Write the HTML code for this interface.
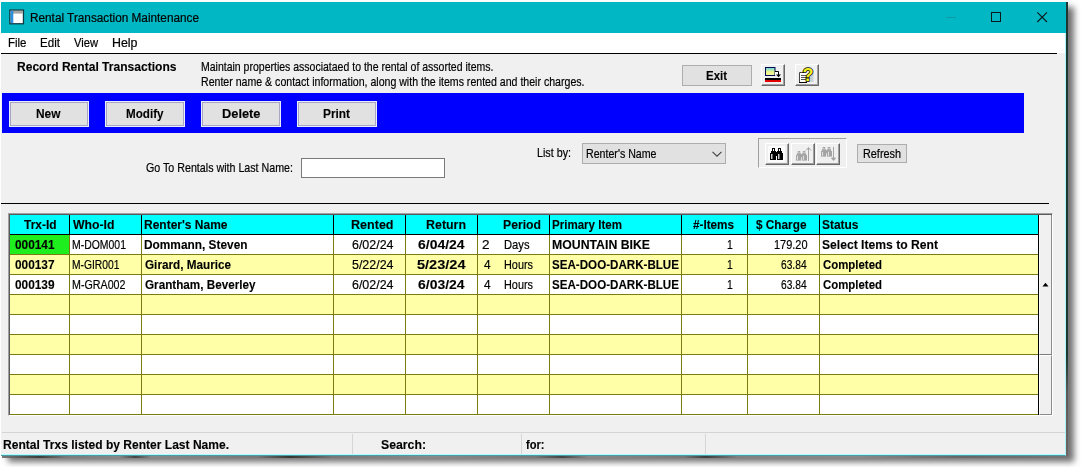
<!DOCTYPE html>
<html lang="en"><head><meta charset="utf-8"><title>Rental Transaction Maintenance</title>
<style>
html,body{margin:0;padding:0}
body{width:1081px;height:467px;overflow:hidden;position:relative;background:#fff;font-family:"Liberation Sans",sans-serif}
div,span,svg{position:absolute;box-sizing:border-box}
.t{white-space:pre;line-height:1em;transform-origin:0 0;color:#000;-webkit-text-stroke:0.2px #000}
.b{font-weight:bold;-webkit-text-stroke:0.12px #000}
.btn{background:#e1e1e1;border:1px solid #adadad}
.tb{background:#e1e1e1;border:1px solid #a6a6c4;outline:1px solid #ececff}
.r3{background:#f0f0f0;border-top:1px solid #fff;border-left:1px solid #fff;border-right:1px solid #696969;border-bottom:1px solid #696969}
.r3:after{content:"";position:absolute;left:0;top:0;right:0;bottom:0;border-right:1px solid #a0a0a0;border-bottom:1px solid #a0a0a0}
.vl{width:1px;background:#7c7c10}
.hl{height:1px;background:#7c7c10}
</style></head>
<body>
<div id="shadow" style="left:8px;top:6.5px;width:1065.5px;height:455px;background:rgba(0,0,0,.56);filter:blur(3.2px)"></div>
<div style="left:2px;top:456px;width:1066px;height:2px;background:linear-gradient(to right,#777 0,#3a3d38 3.5%,#7a7a78 6%,#888 11%,#444 12.5%,#888 14%,#777 24%,#33352e 27%,#777 31%,#8a8a8a 40%,#777 50%,#444 52.5%,#888 55%,#777 64%,#3c3c3c 66%,#808080 69%,#8a8a8a 80%,#666 90%,#777 100%)"></div>
<div style="left:1066px;top:2px;width:2px;height:454px;background:linear-gradient(to bottom,#1d3832 0,#1d3832 78%,#5c5a58 86%,#6b6664 100%)"></div>
<div id="window" style="left:1px;top:2px;width:1065px;height:454px;background:#f0f0f0;border-right:1px solid #a8f4f8;border-bottom:1px solid #4a9ca4">
</div>
<div style="left:1px;top:454px;width:1065px;height:1px;background:#b4fbfd"></div>
<div id="titlebar" style="left:1px;top:2px;width:1065px;height:31px;background:#00b7c3"></div>
<svg style="left:9px;top:9px" width="16" height="16" viewBox="0 0 16 16"><rect x="0.2" y="0.4" width="14.9" height="15" fill="#0c3a44"/><rect x="1.6" y="1.8" width="12.2" height="12.3" fill="#fff"/><rect x="1.6" y="1.8" width="12.2" height="2.8" fill="#a4a4a4"/><rect x="1.6" y="1.8" width="2.7" height="12.3" fill="#2a8fdc"/></svg>
<div style="left:946px;top:17px;width:10px;height:1px;background:#0c9aa6"></div>
<div style="left:991px;top:12px;width:10px;height:10px;border:1px solid #0a1a1c"></div>
<svg style="left:1036px;top:11px" width="13" height="13" viewBox="0 0 13 13"><path d="M1.3 1.3 L11 11 M11 1.3 L1.3 11" stroke="#0a1a1c" stroke-width="1.1" fill="none"/></svg>
<div id="menubar" style="left:1px;top:33px;width:1064px;height:20px;background:#fff"></div>
<div style="left:1px;top:53px;width:1056px;height:1px;background:#000"></div>
<div id="toolbar" style="left:2px;top:93px;width:1022px;height:40px;background:#0000fe"></div>
<div class="tb" style="left:10px;top:102px;width:78px;height:24px;"></div>
<div class="tb" style="left:106px;top:102px;width:78px;height:24px;"></div>
<div class="tb" style="left:202px;top:102px;width:78px;height:24px;"></div>
<div class="tb" style="left:298px;top:102px;width:78px;height:24px;"></div>
<div class="btn" style="left:682px;top:65px;width:70px;height:21px;"></div>
<div class="r3" style="left:761px;top:64px;width:24px;height:22px;"></div>
<div class="r3" style="left:795px;top:64px;width:24px;height:22px;"></div>
<svg style="left:761px;top:64px" width="24" height="22" viewBox="0 0 24 22">
<defs><linearGradient id="g1" x1="0" y1="0" x2="0" y2="1"><stop offset="0" stop-color="#5fd0e8"/><stop offset="0.55" stop-color="#eef58a"/><stop offset="1" stop-color="#f6f6a0"/></linearGradient></defs>
<rect x="4.5" y="3.5" width="9.5" height="8" fill="url(#g1)" stroke="#000a50" stroke-width="1"/>
<path d="M14 7.5 H17.5 V11" stroke="#000" stroke-width="1" fill="none"/>
<rect x="14" y="8" width="3" height="3.5" fill="#fff"/>
<path d="M15 10.5 H20 L17.5 13.2 Z" fill="#000"/>
<rect x="4" y="14" width="16" height="2" fill="#000"/>
<rect x="4" y="16" width="16" height="2" fill="#e00000"/>
</svg>
<svg style="left:795px;top:64px" width="24" height="22" viewBox="0 0 24 22">
<rect x="5" y="8" width="8" height="10" fill="#fff" stroke="#333" stroke-width="0"/>
<path d="M4.5 18.5 V8.5 H9" stroke="#444" stroke-width="1" fill="none"/>
<path d="M4 18.5 H12" stroke="#000" stroke-width="1" fill="none"/>
<path d="M6 11.5 H11 M6 13.5 H11 M6 15.5 H11" stroke="#555" stroke-width="1"/>
<rect x="15" y="6" width="3.5" height="12" fill="#b8c4cc" opacity="0.7"/>
<text x="7.6" y="16.8" font-family="Liberation Sans, sans-serif" font-weight="bold" font-size="18" fill="#f4f020" stroke="#000" stroke-width="1.5" paint-order="stroke">?</text>
</svg>
<div style="left:301px;top:158px;width:144px;height:20px;background:#fff;border:1px solid #7a7a7a"></div>
<div class="btn" style="left:582px;top:143px;width:144px;height:21px;"></div>
<svg style="left:711px;top:150px" width="12" height="8" viewBox="0 0 12 8"><path d="M1.5 1.8 L6 6.2 L10.5 1.8" stroke="#444" stroke-width="1.1" fill="none"/></svg>
<div style="left:758px;top:138px;width:89px;height:30px;border-top:1px solid #a0a0a0;border-left:1px solid #a0a0a0;border-right:1px solid #fff;border-bottom:1px solid #fff"></div>
<div class="r3" style="left:765px;top:143px;width:24px;height:22px;"></div>
<div class="r3" style="left:791px;top:143px;width:24px;height:22px;"></div>
<div class="r3" style="left:816px;top:143px;width:24px;height:22px;"></div>
<svg style="left:758px;top:138px" width="89" height="30" viewBox="758 138 89 30">
<rect x="768" y="146" width="17" height="16" fill="#fbfbfb"/>
<g transform="translate(770,148)" fill="#000"><rect x="2" y="0" width="3" height="4"/><rect x="1" y="3" width="5" height="3"/><rect x="0" y="5" width="6" height="7"/><rect x="8" y="0" width="3" height="4"/><rect x="7" y="3" width="5" height="3"/><rect x="7" y="5" width="6" height="7"/><rect x="5" y="4" width="3" height="4"/><rect x="1.2" y="6" width="1.2" height="5" fill="#fff"/><rect x="8.2" y="6" width="1.2" height="5" fill="#fff"/><rect x="3" y="1" width="1" height="2" fill="#fff"/><rect x="9" y="1" width="1" height="2" fill="#fff"/></g>

<g transform="translate(796,151) scale(0.846,0.8)" fill="#a4a4a4"><g transform="translate(0,0)" fill="#a4a4a4"><rect x="2" y="0" width="3" height="4"/><rect x="1" y="3" width="5" height="3"/><rect x="0" y="5" width="6" height="7"/><rect x="8" y="0" width="3" height="4"/><rect x="7" y="3" width="5" height="3"/><rect x="7" y="5" width="6" height="7"/><rect x="5" y="4" width="3" height="4"/><rect x="1.2" y="6" width="1.2" height="5" fill="#e4e4e4"/><rect x="8.2" y="6" width="1.2" height="5" fill="#e4e4e4"/><rect x="3" y="1" width="1" height="2" fill="#e4e4e4"/><rect x="9" y="1" width="1" height="2" fill="#e4e4e4"/></g></g>
<path d="M808.5 148 V161" stroke="#a4a4a4" stroke-width="1"/><path d="M806 150.5 L808.5 147.5 L811 150.5" stroke="#a4a4a4" stroke-width="1" fill="none"/>
<g transform="translate(821,147) scale(0.846,0.8)" fill="#a4a4a4"><g transform="translate(0,0)" fill="#a4a4a4"><rect x="2" y="0" width="3" height="4"/><rect x="1" y="3" width="5" height="3"/><rect x="0" y="5" width="6" height="7"/><rect x="8" y="0" width="3" height="4"/><rect x="7" y="3" width="5" height="3"/><rect x="7" y="5" width="6" height="7"/><rect x="5" y="4" width="3" height="4"/><rect x="1.2" y="6" width="1.2" height="5" fill="#e4e4e4"/><rect x="8.2" y="6" width="1.2" height="5" fill="#e4e4e4"/><rect x="3" y="1" width="1" height="2" fill="#e4e4e4"/><rect x="9" y="1" width="1" height="2" fill="#e4e4e4"/></g></g>
<path d="M833.5 147 V160" stroke="#a4a4a4" stroke-width="1"/><path d="M831.5 158 L833.5 160.5 L835.5 158 Z" stroke="#a4a4a4" stroke-width="1" fill="#a4a4a4"/>
</svg>
<div class="btn" style="left:857px;top:144px;width:50px;height:19px;"></div>
<div style="left:1px;top:203px;width:1048px;height:1px;background:#000"></div>
<div style="left:8px;top:213px;width:1045px;height:203px;background:#f0f0f0;border-top:1px solid #a0a0a0;border-left:1px solid #a0a0a0;border-right:1px solid #fff;border-bottom:1px solid #fff"></div>
<div style="left:9px;top:214px;width:1043px;height:201px;border-top:1px solid #5a5a5a;border-left:1px solid #5a5a5a"></div>
<div style="left:10px;top:215px;width:1028px;height:19px;background:#00ffff"></div>
<div style="left:10px;top:235px;width:1028px;height:19px;background:#ffffff"></div>
<div style="left:10px;top:255px;width:1028px;height:19px;background:#ffffa8"></div>
<div style="left:10px;top:275px;width:1028px;height:19px;background:#ffffff"></div>
<div style="left:10px;top:295px;width:1028px;height:19px;background:#ffffa8"></div>
<div style="left:10px;top:315px;width:1028px;height:19px;background:#ffffff"></div>
<div style="left:10px;top:335px;width:1028px;height:19px;background:#ffffa8"></div>
<div style="left:10px;top:355px;width:1028px;height:19px;background:#ffffff"></div>
<div style="left:10px;top:375px;width:1028px;height:19px;background:#ffffa8"></div>
<div style="left:10px;top:395px;width:1028px;height:19px;background:#ffffff"></div>
<div style="left:10px;top:235px;width:59px;height:19px;background:#1eee1e"></div>
<div style="left:10px;top:234px;width:1028px;height:1px;background:#000"></div>
<div class="hl" style="left:10px;top:254px;width:1028px;height:1px;"></div>
<div class="hl" style="left:10px;top:274px;width:1028px;height:1px;"></div>
<div class="hl" style="left:10px;top:294px;width:1028px;height:1px;"></div>
<div class="hl" style="left:10px;top:314px;width:1028px;height:1px;"></div>
<div class="hl" style="left:10px;top:334px;width:1028px;height:1px;"></div>
<div class="hl" style="left:10px;top:354px;width:1028px;height:1px;"></div>
<div class="hl" style="left:10px;top:374px;width:1028px;height:1px;"></div>
<div class="hl" style="left:10px;top:394px;width:1028px;height:1px;"></div>
<div class="hl" style="left:10px;top:414px;width:1028px;height:1px;"></div>
<div style="left:69px;top:215px;width:1px;height:20px;background:#000"></div>
<div class="vl" style="left:69px;top:235px;width:1px;height:180px;"></div>
<div style="left:141px;top:215px;width:1px;height:20px;background:#000"></div>
<div class="vl" style="left:141px;top:235px;width:1px;height:180px;"></div>
<div style="left:333px;top:215px;width:1px;height:20px;background:#000"></div>
<div class="vl" style="left:333px;top:235px;width:1px;height:180px;"></div>
<div style="left:405px;top:215px;width:1px;height:20px;background:#000"></div>
<div class="vl" style="left:405px;top:235px;width:1px;height:180px;"></div>
<div style="left:477px;top:215px;width:1px;height:20px;background:#000"></div>
<div class="vl" style="left:477px;top:235px;width:1px;height:180px;"></div>
<div style="left:549px;top:215px;width:1px;height:20px;background:#000"></div>
<div class="vl" style="left:549px;top:235px;width:1px;height:180px;"></div>
<div style="left:681px;top:215px;width:1px;height:20px;background:#000"></div>
<div class="vl" style="left:681px;top:235px;width:1px;height:180px;"></div>
<div style="left:747px;top:215px;width:1px;height:20px;background:#000"></div>
<div class="vl" style="left:747px;top:235px;width:1px;height:180px;"></div>
<div style="left:819px;top:215px;width:1px;height:20px;background:#000"></div>
<div class="vl" style="left:819px;top:235px;width:1px;height:180px;"></div>
<div style="left:1038px;top:215px;width:1px;height:200px;background:#000"></div>
<div style="left:1039px;top:215px;width:13px;height:140px;background:#f0f0f0;border-right:1px solid #8c8c8c;border-bottom:1px solid #7a7a7a;border-left:1px solid #fafafa"></div>
<div style="left:1039px;top:355px;width:13px;height:60px;background:#f0f0f0;border-top:1px solid #fff;border-left:1px solid #fff;border-right:1px solid #8c8c8c;border-bottom:1px solid #8c8c8c"></div>
<svg style="left:1042px;top:282px" width="8" height="5" viewBox="0 0 8 5"><path d="M0.5 4.5 L3.5 0.8 L6.5 4.5 Z" fill="#000"/></svg>
<div style="left:2px;top:432px;width:1063px;height:1px;background:#d4d4d4"></div>
<div style="left:352px;top:434px;width:1px;height:20px;background:#d6d6d6"></div>
<div style="left:521px;top:434px;width:1px;height:20px;background:#d6d6d6"></div>
<div style="left:705px;top:434px;width:1px;height:20px;background:#d6d6d6"></div>
<span class="t" style="left:29.52px;top:12px;font-size:12px;transform:scaleX(0.9820)">Rental Transaction Maintenance</span>
<span class="t" style="left:8.01px;top:37px;font-size:12px;transform:scaleX(0.9565)">File</span>
<span class="t" style="left:39.56px;top:37px;font-size:12px;transform:scaleX(0.9661)">Edit</span>
<span class="t" style="left:73.96px;top:37px;font-size:12px;transform:scaleX(0.9314)">View</span>
<span class="t" style="left:111.97px;top:37px;font-size:12px;transform:scaleX(1.0329)">Help</span>
<span class="t b" style="left:17.07px;top:60px;font-size:13px;transform:scaleX(0.9276)">Record Rental Transactions</span>
<span class="t" style="left:201.19px;top:60px;font-size:13px;transform:scaleX(0.8079)">Maintain properties associataed to the rental of assorted items.</span>
<span class="t" style="left:201.19px;top:75px;font-size:13px;transform:scaleX(0.8140)">Renter name &amp; contact information, along with the items rented and their charges.</span>
<span class="t b" style="left:706.12px;top:69px;font-size:13px;transform:scaleX(0.8802)">Exit</span>
<span class="t b" style="left:36.08px;top:107px;font-size:13px;transform:scaleX(0.9157)">New</span>
<span class="t b" style="left:126.11px;top:107px;font-size:13px;transform:scaleX(0.8947)">Modify</span>
<span class="t b" style="left:221.52px;top:107px;font-size:13px;transform:scaleX(0.9869)">Delete</span>
<span class="t b" style="left:323.08px;top:107px;font-size:13px;transform:scaleX(0.9121)">Print</span>
<span class="t" style="left:145.67px;top:161px;font-size:13px;transform:scaleX(0.8214)">Go To Rentals with Last Name:</span>
<span class="t" style="left:536.97px;top:146px;font-size:13px;transform:scaleX(0.8260)">List by:</span>
<span class="t" style="left:586.19px;top:147px;font-size:13px;transform:scaleX(0.8170)">Renter's Name</span>
<span class="t" style="left:862.68px;top:147px;font-size:13px;transform:scaleX(0.8349)">Refresh</span>
<span class="t b" style="left:24.03px;top:218px;font-size:13px;transform:scaleX(0.9186)">Trx-Id</span>
<span class="t b" style="left:72.54px;top:218px;font-size:13px;transform:scaleX(0.9423)">Who-Id</span>
<span class="t b" style="left:144.08px;top:218px;font-size:13px;transform:scaleX(0.9223)">Renter's Name</span>
<span class="t b" style="left:351.03px;top:218px;font-size:13px;transform:scaleX(0.9654)">Rented</span>
<span class="t b" style="left:425.54px;top:218px;font-size:13px;transform:scaleX(0.9553)">Return</span>
<span class="t b" style="left:503.06px;top:218px;font-size:13px;transform:scaleX(0.9395)">Period</span>
<span class="t b" style="left:551.62px;top:218px;font-size:13px;transform:scaleX(0.8888)">Primary Item</span>
<span class="t b" style="left:693.08px;top:218px;font-size:13px;transform:scaleX(0.9008)">#-Items</span>
<span class="t b" style="left:756.07px;top:218px;font-size:13px;transform:scaleX(0.9074)">$ Charge</span>
<span class="t b" style="left:821.58px;top:218px;font-size:13px;transform:scaleX(0.9191)">Status</span>
<span class="t b" style="left:15.05px;top:238px;font-size:13px;transform:scaleX(0.9105)">000141</span>
<span class="t" style="left:72.21px;top:238px;font-size:13px;transform:scaleX(0.8036)">M-DOM001</span>
<span class="t b" style="left:144.09px;top:238px;font-size:13px;transform:scaleX(0.9125)">Dommann, Steven</span>
<span class="t" style="left:352.04px;top:238px;font-size:13px;transform:scaleX(0.9568)">6/02/24</span>
<span class="t b" style="left:417.86px;top:238px;font-size:13px;transform:scaleX(1.0726)">6/04/24</span>
<span class="t" style="left:482.05px;top:238px;font-size:13px;transform:scaleX(1.0386)">2</span>
<span class="t" style="left:503.62px;top:238px;font-size:13px;transform:scaleX(0.8608)">Days</span>
<span class="t b" style="left:551.55px;top:238px;font-size:13px;transform:scaleX(0.9445)">MOUNTAIN BIKE</span>
<span class="t" style="left:727.15px;top:238px;font-size:13px;transform:scaleX(0.8000)">1</span>
<span class="t" style="left:774.16px;top:238px;font-size:13px;transform:scaleX(0.8424)">179.20</span>
<span class="t b" style="left:821.57px;top:238px;font-size:13px;transform:scaleX(0.9334)">Select Items to Rent</span>
<span class="t b" style="left:15.05px;top:258px;font-size:13px;transform:scaleX(0.9105)">000137</span>
<span class="t" style="left:72.21px;top:258px;font-size:13px;transform:scaleX(0.7920)">M-GIR001</span>
<span class="t b" style="left:145.08px;top:258px;font-size:13px;transform:scaleX(0.9018)">Girard, Maurice</span>
<span class="t" style="left:352.04px;top:258px;font-size:13px;transform:scaleX(0.9568)">5/22/24</span>
<span class="t b" style="left:416.88px;top:258px;font-size:13px;transform:scaleX(1.1182)">5/23/24</span>
<span class="t" style="left:483.85px;top:258px;font-size:13px;transform:scaleX(0.9088)">4</span>
<span class="t" style="left:503.66px;top:258px;font-size:13px;transform:scaleX(0.8362)">Hours</span>
<span class="t b" style="left:551.61px;top:258px;font-size:13px;transform:scaleX(0.8926)">SEA-DOO-DARK-BLUE</span>
<span class="t" style="left:727.15px;top:258px;font-size:13px;transform:scaleX(0.8000)">1</span>
<span class="t" style="left:781.14px;top:258px;font-size:13px;transform:scaleX(0.7857)">63.84</span>
<span class="t b" style="left:822.61px;top:258px;font-size:13px;transform:scaleX(0.8783)">Completed</span>
<span class="t b" style="left:15.05px;top:278px;font-size:13px;transform:scaleX(0.9105)">000139</span>
<span class="t" style="left:72.17px;top:278px;font-size:13px;transform:scaleX(0.8227)">M-GRA002</span>
<span class="t b" style="left:145.09px;top:278px;font-size:13px;transform:scaleX(0.8997)">Grantham, Beverley</span>
<span class="t" style="left:352.04px;top:278px;font-size:13px;transform:scaleX(0.9568)">6/02/24</span>
<span class="t b" style="left:417.86px;top:278px;font-size:13px;transform:scaleX(1.0726)">6/03/24</span>
<span class="t" style="left:483.85px;top:278px;font-size:13px;transform:scaleX(0.9088)">4</span>
<span class="t" style="left:503.66px;top:278px;font-size:13px;transform:scaleX(0.8362)">Hours</span>
<span class="t b" style="left:551.61px;top:278px;font-size:13px;transform:scaleX(0.8926)">SEA-DOO-DARK-BLUE</span>
<span class="t" style="left:727.15px;top:278px;font-size:13px;transform:scaleX(0.8000)">1</span>
<span class="t" style="left:781.14px;top:278px;font-size:13px;transform:scaleX(0.7857)">63.84</span>
<span class="t b" style="left:822.61px;top:278px;font-size:13px;transform:scaleX(0.8783)">Completed</span>
<span class="t b" style="left:3.07px;top:438px;font-size:13px;transform:scaleX(0.9255)">Rental Trxs listed by Renter Last Name.</span>
<span class="t b" style="left:380.54px;top:438px;font-size:13px;transform:scaleX(0.9436)">Search:</span>
<span class="t b" style="left:526.09px;top:438px;font-size:13px;transform:scaleX(0.8524)">for:</span>
</body></html>
